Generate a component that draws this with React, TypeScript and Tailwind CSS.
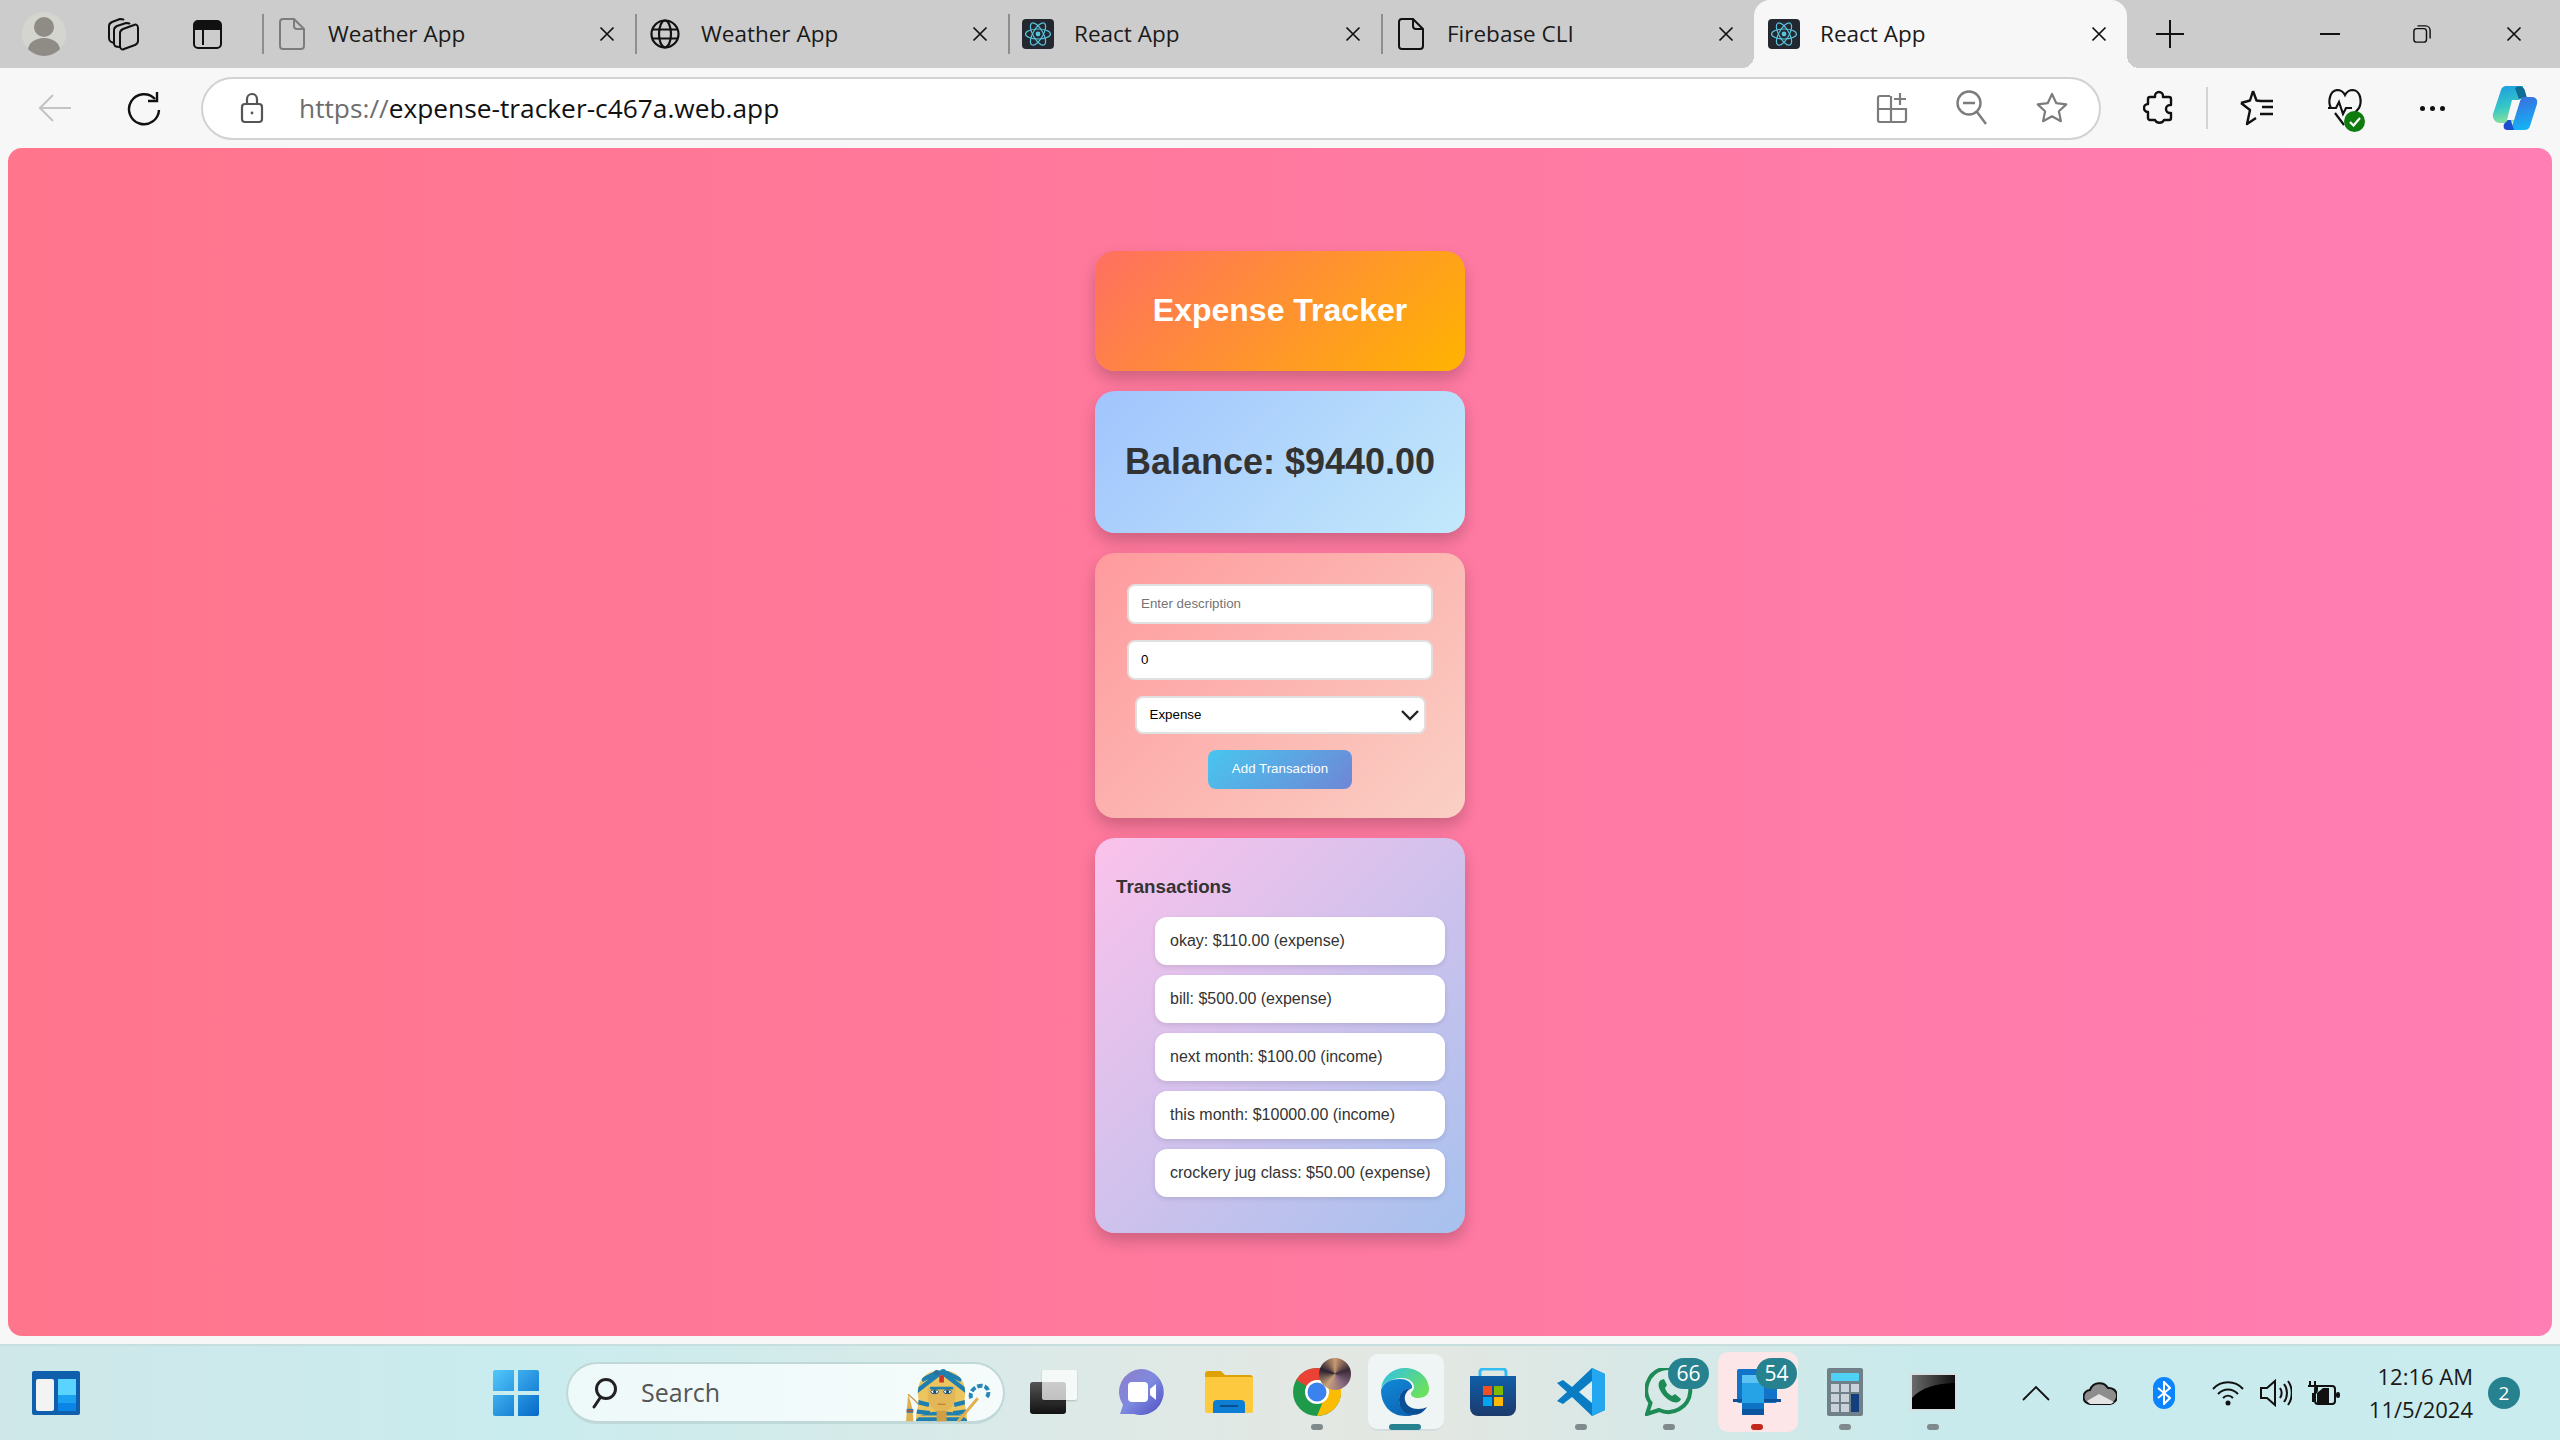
import type { ReactNode } from 'react'

const uiFont = "font-['Open_Sans','Noto_Sans',sans-serif]"

const transactions = [
  'okay: $110.00 (expense)',
  'bill: $500.00 (expense)',
  'next month: $100.00 (income)',
  'this month: $10000.00 (income)',
  'crockery jug class: $50.00 (expense)',
]

function CloseX() {
  return (
    <svg width="16" height="16" viewBox="0 0 16 16" fill="none" stroke="#111" strokeWidth="1.7">
      <path d="M1.5 1.5l13 13M14.5 1.5l-13 13" />
    </svg>
  )
}

function FileIcon({ color = '#7d7d7d' }: { color?: string }) {
  return (
    <svg width="26" height="32" viewBox="0 0 26 32" fill="none" stroke={color} strokeWidth="2">
      <path d="M4 1h11l10 10v17a3 3 0 0 1-3 3H4a3 3 0 0 1-3-3V4a3 3 0 0 1 3-3z" />
      <path d="M15 1v7a3 3 0 0 0 3 3h7" />
    </svg>
  )
}

function GlobeIcon() {
  return (
    <svg width="30" height="30" viewBox="0 0 30 30" fill="none" stroke="#111" strokeWidth="2.2">
      <circle cx="15" cy="15" r="13.5" />
      <ellipse cx="15" cy="15" rx="6" ry="13.5" />
      <path d="M2 10.5h26M2 19.5h26" />
    </svg>
  )
}

function ReactIcon() {
  return (
    <div className="flex h-[30px] w-[32px] items-center justify-center rounded-[4px] bg-[#23272f]">
      <svg width="28" height="28" viewBox="-14 -14 28 28" fill="none" stroke="#58c4dc" strokeWidth="1.2">
        <circle r="2.4" fill="#58c4dc" stroke="none" />
        <ellipse rx="12.5" ry="5" />
        <ellipse rx="12.5" ry="5" transform="rotate(60)" />
        <ellipse rx="12.5" ry="5" transform="rotate(120)" />
      </svg>
    </div>
  )
}

function Tab({ icon, title, active }: { icon: ReactNode; title: string; active?: boolean }) {
  return (
    <div
      className={`relative flex h-[68px] w-[373px] shrink-0 items-center ${
        active ? 'rounded-t-[16px] bg-[#f7f7f7]' : ''
      }`}
    >
      {!active && <div className="h-[40px] w-[2px] bg-[#8e8e8e]" />}
      <div className={`flex w-[56px] justify-center ${active ? 'ml-[2px]' : ''}`}>{icon}</div>
      <span className={`${uiFont} ml-[8px] w-[271px] text-[22.5px] leading-none text-[#1a1a1a]`}>{title}</span>
      <CloseX />
      {active && (
        <>
          <div className="absolute bottom-0 left-[-12px] h-[12px] w-[12px] bg-[radial-gradient(circle_at_0_0,transparent_12px,#f7f7f7_12px)]" />
          <div className="absolute bottom-0 right-[-12px] h-[12px] w-[12px] bg-[radial-gradient(circle_at_100%_0,transparent_12px,#f7f7f7_12px)]" />
        </>
      )}
    </div>
  )
}

function ToolbarSlot({ children, className = 'w-[80px]' }: { children: ReactNode; className?: string }) {
  return <div className={`flex h-full shrink-0 items-center justify-center ${className}`}>{children}</div>
}

function TabStrip() {
  return (
    <div className="flex h-[68px] shrink-0 items-center bg-[#cccccc]">
      <div className="flex w-[262px] shrink-0 items-center">
        <div className="ml-[22px] flex h-[44px] w-[44px] items-center justify-center overflow-hidden rounded-full bg-[#d5d5d0]">
          <svg width="44" height="44" viewBox="0 0 44 44" fill="#8f8b85">
            <circle cx="22" cy="15" r="10" />
            <ellipse cx="22" cy="38" rx="16" ry="12" />
          </svg>
        </div>
        <div className="ml-[40px]">
          <svg width="36" height="36" viewBox="0 0 36 36" fill="none" stroke="#111" strokeWidth="2" strokeLinejoin="round">
            <path d="M8 27 C4 26 3 25 3 22V10c0-2 1-3 3-4l8-3c1 0 3 0 4 1" />
            <path d="M14 31c-5 0-6-1-6-4V14c0-2 1-3 3-4l9-3c1 0 3 0 4 1" />
            <path d="M14 17c0-2 1-3 3-4l11-4c2-1 4 0 4 3v13c0 2-1 3-3 4l-11 4c-2 1-4 0-4-3z" />
          </svg>
        </div>
        <div className="ml-[51px] h-[29px] w-[29px] rounded-[5px] border-[2px] border-[#111] bg-[linear-gradient(#111_0_8px,transparent_8px)]">
          <div className="ml-[7px] mt-[7px] h-[16px] w-[2px] bg-[#111]" />
        </div>
      </div>
      <Tab icon={<FileIcon />} title="Weather App" />
      <Tab icon={<GlobeIcon />} title="Weather App" />
      <Tab icon={<ReactIcon />} title="React App" />
      <Tab icon={<FileIcon color="#111" />} title="Firebase CLI" />
      <Tab icon={<ReactIcon />} title="React App" active />
      <div className="ml-[28px] flex w-[30px] justify-center">
        <svg width="30" height="30" viewBox="0 0 30 30" stroke="#111" strokeWidth="2">
          <path d="M15 1v28M1 15h28" />
        </svg>
      </div>
      <div className="ml-[133px] flex w-[24px] justify-center">
        <div className="h-[2px] w-[20px] bg-[#111]" />
      </div>
      <div className="ml-[71px] flex w-[18px] justify-center">
        <svg width="20" height="20" viewBox="0 0 20 20" fill="none" stroke="#111" strokeWidth="1.6">
          <rect x="1" y="4" width="14" height="15" rx="3" />
          <path d="M5 1h9a5 5 0 0 1 5 5v9" />
        </svg>
      </div>
      <div className="ml-[75px]">
        <CloseX />
      </div>
    </div>
  )
}

function AddressBar() {
  return (
    <div className="flex h-[80px] shrink-0 items-center bg-[#f7f7f7]">
      <ToolbarSlot className="ml-[15px] w-[80px]">
        <svg width="36" height="32" viewBox="0 0 36 32" fill="none" stroke="#c4c4c4" strokeWidth="2.2">
          <path d="M34 16H3M16 3L3 16l13 13" />
        </svg>
      </ToolbarSlot>
      <ToolbarSlot className="ml-[9px] w-[80px]">
        <svg width="36" height="36" viewBox="0 0 36 36" fill="none" stroke="#111" strokeWidth="2.4">
          <path d="M29 9a15 15 0 1 0 4 11" />
          <path d="M31 2v9h-9" />
        </svg>
      </ToolbarSlot>
      <div className="ml-[17px] flex h-[63px] w-[1900px] shrink-0 items-center rounded-full border-[2px] border-[#d2d2d2] bg-white">
        <div className="ml-[37px] w-[28px]">
          <svg width="24" height="32" viewBox="0 0 24 32" fill="none" stroke="#555" strokeWidth="2.2">
            <rect x="2" y="12" width="20" height="18" rx="3" />
            <path d="M7 12V7a5 5 0 0 1 10 0v5" />
            <circle cx="12" cy="21" r="1.4" fill="#555" stroke="none" />
          </svg>
        </div>
        <span className={`${uiFont} ml-[31px] text-[26.3px] leading-none text-[#111]`}>
          <span className="text-[#6d6d6d]">https://</span>expense-tracker-c467a.web.app
        </span>
        <div className="ml-auto mr-[31px] flex items-center gap-[48px]">
          <svg width="32" height="32" viewBox="0 0 32 32" fill="none" stroke="#7c7c7c" strokeWidth="2.2">
            <path d="M14 4H4a2 2 0 0 0-2 2v22a2 2 0 0 0 2 2h24a2 2 0 0 0 2-2V17H2M15 4v26" />
            <path d="M24 1v12M18 7h12" />
          </svg>
          <svg width="32" height="36" viewBox="0 0 32 36" fill="none" stroke="#7c7c7c" strokeWidth="2.4">
            <circle cx="13" cy="13" r="11.5" />
            <path d="M7 13h12M21 22l9 12" />
          </svg>
          <svg width="32" height="32" viewBox="0 0 32 32" fill="none" stroke="#7c7c7c" strokeWidth="2.2" strokeLinejoin="round">
            <path d="M16 2l4.300 9.200 10 1.200-7.400 6.800 2 10L16 24.300 7.100 29.200l2-10L1.700 12.400l10-1.200z" />
          </svg>
        </div>
      </div>
      <ToolbarSlot className="ml-[26px] w-[64px]">
        <svg width="32" height="36" viewBox="0 0 32 36" fill="none" stroke="#111" strokeWidth="2.4" strokeLinejoin="round">
          <path d="M12 6a4 4 0 0 1 8 0v1h6a2 2 0 0 1 2 2v6h-1a4 4 0 0 0 0 8h1v5a2 2 0 0 1-2 2h-5a5 5 0 0 1-9 0H7a2 2 0 0 1-2-2v-6a4 4 0 0 1 0-8V9a2 2 0 0 1 2-2h5z" />
        </svg>
      </ToolbarSlot>
      <div className="ml-[15px] h-[42px] w-[2px] bg-[#d4d4d4]" />
      <ToolbarSlot className="ml-[17px] w-[64px]">
        <svg width="34" height="38" viewBox="0 0 34 38" fill="none" stroke="#111" strokeWidth="2.4" strokeLinejoin="round">
          <path d="M13 2l3.500 9.500 4 .5M1 14l9 7-3 14 9-6M22 18h11M20 25h13M19 12h14" />
          <path d="M1 14l9-2.500L13 2" />
        </svg>
      </ToolbarSlot>
      <ToolbarSlot className="ml-[24px] w-[64px]">
        <div className="relative h-[42px] w-[36px]">
          <svg width="36" height="42" viewBox="0 0 36 42" fill="none" stroke="#111" strokeWidth="2.2">
            <path d="M4 21C1 16 2 4 10 3c4 0 7 3 8 5 1-2 4-5 8-5 8 1 9 12 6 18L23 32M1 21h8l3-6 4 12 3-6h6M8 26l9 12" />
          </svg>
          <div className="absolute bottom-[-3px] right-[-2px] flex h-[21px] w-[21px] items-center justify-center rounded-full bg-[#107c10]">
            <svg width="12" height="10" viewBox="0 0 12 10" fill="none" stroke="white" strokeWidth="2.2">
              <path d="M1 5l3.500 3.500L11 1" />
            </svg>
          </div>
        </div>
      </ToolbarSlot>
      <ToolbarSlot className="ml-[23px] w-[64px]">
        <div className="flex gap-[5px]">
          <div className="h-[5px] w-[5px] rounded-full bg-[#111]" />
          <div className="h-[5px] w-[5px] rounded-full bg-[#111]" />
          <div className="h-[5px] w-[5px] rounded-full bg-[#111]" />
        </div>
      </ToolbarSlot>
      <ToolbarSlot className="ml-[18px] w-[64px]">
        <svg width="48" height="48" viewBox="0 0 48 48">
          <defs>
            <linearGradient id="copA" x1="0.2" y1="0" x2="0.4" y2="1">
              <stop offset="0" stopColor="#1b9de2" />
              <stop offset="0.6" stopColor="#38c9c4" />
              <stop offset="1" stopColor="#8be29a" />
            </linearGradient>
            <linearGradient id="copB" x1="0.4" y1="0" x2="0.6" y2="1">
              <stop offset="0" stopColor="#3a6fe0" />
              <stop offset="1" stopColor="#14b4f5" />
            </linearGradient>
          </defs>
          <path d="M16 2h17l-9 34c-1 3-4 3-6 3H10C5 39 2 34 3 30L11 6c1-3 3-4 5-4z" fill="url(#copA)" />
          <path d="M25 4c4-3 9-2 10 3l2 7-8 1z" fill="#0f6d93" />
          <path d="M32 13h10c4 0 6 3 5 7l-7 22c-1 3-3 4-6 4H17l5-4 8-25z" fill="url(#copB)" />
          <path d="M20 34l4 12H17c-3 0-4-3-3-6z" fill="#1c4fd0" />
          <path d="M22 16h8l-6 20h-7z" fill="#f7f7f7" />
        </svg>
      </ToolbarSlot>
    </div>
  )
}

function Card({ className, children }: { className: string; children: ReactNode }) {
  return (
    <div className={`w-[370px] shrink-0 rounded-[20px] shadow-[0_8px_16px_rgba(0,0,0,0.2)] ${className}`}>{children}</div>
  )
}

function ExpenseTracker() {
  return (
    <div className="mx-[8px] flex h-[1188px] shrink-0 flex-col items-center gap-[20px] rounded-[14px] bg-[linear-gradient(to_right,#ff758c,#ff7eb3)] pt-[103px] font-['Liberation_Sans',Arial,sans-serif]">
      <Card className="flex h-[120px] items-center justify-center bg-[linear-gradient(135deg,#ff6f61,#ffb400)]">
        <h1 className="mt-[-2px] text-[32px] font-bold leading-none text-white">Expense Tracker</h1>
      </Card>
      <Card className="flex h-[142px] items-center justify-center bg-[linear-gradient(135deg,#a1c4fd,#c2e9fb)]">
        <h2 className="text-[36px] font-bold leading-none text-[#333]">Balance: $9440.00</h2>
      </Card>
      <Card className="flex h-[265px] flex-col items-center bg-[linear-gradient(135deg,#ff9a9e,#fad0c4)] pt-[31px]">
        <input
          readOnly
          placeholder="Enter description"
          className="h-[40px] w-[306px] rounded-[8px] border-[2px] border-[#e0e0e0] bg-white px-[12px] pb-[2px] text-[13.33px] text-black outline-none placeholder:text-[#757575]"
        />
        <input
          readOnly
          value="0"
          className="mt-[16px] h-[40px] w-[306px] rounded-[8px] border-[2px] border-[#e0e0e0] bg-white px-[12px] pb-[2px] text-[13.33px] text-black outline-none"
        />
        <div className="relative mt-[16px] h-[38px] w-[291px]">
          <select className="h-full w-full appearance-none rounded-[8px] border-[2px] border-[#e0e0e0] bg-white pl-[13px] text-[13.33px] text-black outline-none">
            <option>Expense</option>
          </select>
          <svg className="absolute right-[7px] top-[13px]" width="18" height="12" viewBox="0 0 18 12" fill="none" stroke="#222" strokeWidth="2.4">
            <path d="M1 2l8 8 8-8" />
          </svg>
        </div>
        <button className="mt-[16px] h-[39px] w-[144px] rounded-[8px] bg-[linear-gradient(135deg,#48c6ef,#6f86d6)] pb-[2px] text-[13.33px] text-white">
          Add Transaction
        </button>
      </Card>
      <Card className="h-[395px] bg-[linear-gradient(135deg,#fbc2eb,#a6c1ee)] pl-[21px] pr-[20px] pt-[38px]">
        <h3 className="text-[18.72px] font-bold leading-[22px] text-[#333]">Transactions</h3>
        <ul className="ml-[39px] mt-[19px] flex flex-col gap-[10px]">
          {transactions.map((item) => (
            <li
              key={item}
              className="flex h-[48px] items-center rounded-[12px] bg-white pl-[15px] text-[16px] text-[#333] shadow-[0_2px_5px_rgba(0,0,0,0.1)]"
            >
              {item}
            </li>
          ))}
        </ul>
      </Card>
    </div>
  )
}

function TaskSlot({
  children,
  dot,
  highlight,
  badge,
}: {
  children: ReactNode
  dot?: string
  highlight?: string
  badge?: string
}) {
  return (
    <div className="relative flex h-[94px] w-[88px] shrink-0 items-center justify-center">
      {highlight && <div className={`absolute rounded-[10px] ${highlight}`} />}
      <div className="relative mt-[-2px]">{children}</div>
      {badge && (
        <div className="absolute right-[4px] top-[12px] flex h-[31px] w-[41px] items-center justify-center rounded-full bg-[#27828f] font-['Open_Sans',sans-serif] text-[21px] text-white">
          {badge}
        </div>
      )}
      {dot && <div className={`absolute bottom-[10px] left-1/2 h-[6px] -translate-x-1/2 rounded-full ${dot}`} />}
    </div>
  )
}

function Pharaoh() {
  return (
    <svg className="absolute right-[11px] top-[4px]" width="87" height="54" viewBox="80 48 262 164">
      <defs>
        <clipPath id="headdress">
          <path d="M112 210c0-30 8-40 8-70C112 100 130 55 190 55s78 45 70 85c0 30 8 40 8 70z" />
        </clipPath>
      </defs>
      <path d="M82 210l6-80c10 20 16 50 16 80z" fill="#e0b050" />
      <path d="M84 172h20v12H84z" fill="#2b7fb0" />
      <path d="M84 176h20v4H84z" fill="#d0502c" />
      <path d="M88 128c25 20 50 50 66 82" fill="none" stroke="#c8963c" strokeWidth="4" />
      <g clipPath="url(#headdress)">
        <rect x="100" y="50" width="180" height="165" fill="#edc55f" />
        <path d="M190 55l-60 30M190 60l-78 60M190 55l60 30M190 60l78 60" stroke="#1f7fb0" strokeWidth="13" fill="none" />
        <path d="M112 150l40 10M268 150l-40 10M110 180l45 5M270 180l-45 5" stroke="#1f7fb0" strokeWidth="13" fill="none" />
        <path d="M110 210c10-20 40-30 80-30s70 10 80 30z" fill="#1f7fb0" />
        <path d="M118 195h145" stroke="#edc55f" strokeWidth="5" />
      </g>
      <rect x="183" y="70" width="14" height="22" fill="#c9352c" />
      <circle cx="195" cy="60" r="9" fill="#1f7fb0" />
      <circle cx="175" cy="62" r="8" fill="#2b6f9b" />
      <path d="M148 105h84v28c0 28-18 48-42 48s-42-20-42-48z" fill="#e3b658" />
      <path d="M155 105h70v8h-70z" fill="#1f7fb0" />
      <ellipse cx="169" cy="120" rx="12" ry="6" fill="#fff" stroke="#17506f" strokeWidth="3" />
      <ellipse cx="208" cy="120" rx="12" ry="6" fill="#fff" stroke="#17506f" strokeWidth="3" />
      <circle cx="169" cy="120" r="5" fill="#17506f" />
      <circle cx="208" cy="120" r="5" fill="#17506f" />
      <path d="M178 158h24" stroke="#a8742c" strokeWidth="3" />
      <path d="M175 178h30v32h-30z" fill="#d09f45" />
      <path d="M240 210l60-70" stroke="#e0b050" strokeWidth="9" />
      <path d="M280 140c-8-20 12-38 32-38 22 0 26 28 12 36" fill="none" stroke="#2487b8" strokeWidth="12" strokeDasharray="16 6" />
    </svg>
  )
}

function Taskbar() {
  return (
    <div className="flex h-[96px] shrink-0 items-center border-t-[2px] border-[#c6dedd] bg-[linear-gradient(to_right,#cfe7e9,#c9ecee_20%,#dfe9e6_45%,#e4e7e2_55%,#c9eaec_75%,#c9ecee)]">
      <svg className="ml-[32px] shrink-0" width="48" height="44" viewBox="0 0 48 44">
        <rect width="48" height="44" rx="2" fill="#0f5fad" />
        <rect x="4" y="8" width="18" height="32" rx="2" fill="#f3f3f3" />
        <rect x="26" y="8" width="18" height="20" fill="#5bd3ff" />
        <rect x="26" y="24" width="18" height="8" fill="#1ba1f0" />
        <rect x="26" y="32" width="18" height="8" fill="#0a84e6" />
      </svg>
      <svg className="ml-[413px] shrink-0" width="46" height="46" viewBox="0 0 46 46">
        <defs>
          <linearGradient id="winA" x1="0" y1="0" x2="1" y2="1">
            <stop offset="0" stopColor="#52c8fb" />
            <stop offset="1" stopColor="#0568c8" />
          </linearGradient>
        </defs>
        <path d="M2 0h19v21H0V2a2 2 0 0 1 2-2zM25 0h19a2 2 0 0 1 2 2v19H25zM0 25h21v21H2a2 2 0 0 1-2-2zM25 25h21v19a2 2 0 0 1-2 2H25z" fill="url(#winA)" />
      </svg>
      <div className="relative ml-[27px] flex h-[62px] w-[439px] shrink-0 items-center rounded-full border-b-[3px] border-l-[2px] border-r-[2px] border-t-[2px] border-[#c0d8d8] bg-[linear-gradient(to_right,#eef9fa,#f5fbfb)]">
        <svg className="ml-[23px]" width="26" height="32" viewBox="0 0 26 32" fill="none" stroke="#222" strokeWidth="3">
          <circle cx="15" cy="12" r="9.500" />
          <path d="M9 21l-6 9" strokeLinecap="round" />
        </svg>
        <span className={`${uiFont} ml-[24px] text-[25px] leading-none text-[#555]`}>Search</span>
        <Pharaoh />
      </div>
      <div className="ml-[4px] flex">
        <TaskSlot>
          <div className="relative h-[44px] w-[47px]">
            <div className="absolute bottom-0 left-0 h-[32px] w-[36px] rounded-[3px] bg-[linear-gradient(#555,#111)]" />
            <div className="absolute right-0 top-0 h-[30px] w-[35px] rounded-[2px] bg-white/70 shadow-[0_1px_2px_rgba(0,0,0,0.2)]" />
          </div>
        </TaskSlot>
        <TaskSlot>
          <svg width="46" height="46" viewBox="0 0 46 46">
            <defs>
              <linearGradient id="meet" x1="0" y1="0" x2="1" y2="1">
                <stop offset="0" stopColor="#8f7ec9" />
                <stop offset="0.5" stopColor="#7d8ae0" />
                <stop offset="1" stopColor="#4f4dc0" />
              </linearGradient>
            </defs>
            <path d="M23 0a23 23 0 1 1-7 45H2l3-9A23 23 0 0 1 23 0z" fill="url(#meet)" />
            <rect x="10" y="13" width="20" height="20" rx="4" fill="#fff" />
            <path d="M32 20l6-5v16l-6-5z" fill="#fff" />
          </svg>
        </TaskSlot>
        <TaskSlot>
          <svg width="48" height="42" viewBox="0 0 48 42">
            <path d="M0 3a3 3 0 0 1 3-3h13l4 4h25a3 3 0 0 1 3 3v4H0z" fill="#e0a106" />
            <path d="M0 6h48v34a2 2 0 0 1-2 2H2a2 2 0 0 1-2-2z" fill="#fdc93f" />
            <path d="M8 42V33a4 4 0 0 1 4-4h24a4 4 0 0 1 4 4v9z" fill="#0c7fd4" />
            <path d="M15 35h18" stroke="#0a4f8c" strokeWidth="2" />
          </svg>
        </TaskSlot>
        <TaskSlot dot="w-[12px] bg-[#7f8a8c]">
          <div className="relative h-[48px] w-[48px]">
            <svg width="48" height="48" viewBox="0 0 48 48">
              <circle cx="24" cy="24" r="24" fill="#1f9a4a" />
              <path d="M24 24L3.200 12A24 24 0 0 1 44.800 12z" fill="#ea4335" />
              <path d="M24 12h21A24 24 0 0 1 24 48l10-24z" fill="#fbbc05" />
              <circle cx="24" cy="24" r="12" fill="#fff" />
              <circle cx="24" cy="24" r="9.500" fill="#3b82ee" />
            </svg>
            <div className="absolute right-[-10px] top-[-10px] h-[32px] w-[32px] rounded-full bg-[conic-gradient(#c79a72,#3a2a3a,#8a6a80,#c9a27a,#2a2030,#c79a72)]" />
          </div>
        </TaskSlot>
        <TaskSlot dot="w-[32px] bg-[#27828f]" highlight="h-[77px] w-[76px] top-[8px] left-[7px] bg-[#eff5f5] border-b-[2px] border-[#d3dddd]">
          <svg width="48" height="48" viewBox="0 0 48 48">
            <defs>
              <linearGradient id="edgeA" x1="0" y1="0" x2="1" y2="0.6">
                <stop offset="0" stopColor="#2cc0ee" />
                <stop offset="1" stopColor="#6ae05f" />
              </linearGradient>
              <linearGradient id="edgeB" x1="0" y1="0" x2="0.5" y2="1">
                <stop offset="0" stopColor="#0f8ad8" />
                <stop offset="1" stopColor="#0e68b8" />
              </linearGradient>
            </defs>
            <path d="M24 0c14 0 24 10 24 21 0 6-5 9-11 9-4 0-7-2-7-4 0-3 3-3 3-7 0-5-5-9-12-9C10 10 2 16 0 20 2 8 12 0 24 0z" fill="url(#edgeA)" />
            <path d="M0 22C2 14 11 11 19 11c8 0 13 5 12 9-6 0-13 4-13 12 0 7 6 13 14 15-2 1-5 1-8 1C10 48 0 37 0 22z" fill="url(#edgeB)" />
            <path d="M31 20c-8 0-13 5-13 12 0 9 7 15 14 15 6 0 11-3 14-8-2 1-5 2-9 2-6 0-12-3-13-9-1-5 2-10 7-12z" fill="#0a4f94" />
          </svg>
        </TaskSlot>
        <TaskSlot>
          <svg width="46" height="48" viewBox="0 0 46 48">
            <defs>
              <linearGradient id="store" x1="0" y1="0" x2="0" y2="1">
                <stop offset="0" stopColor="#0f5ea8" />
                <stop offset="1" stopColor="#1c3a6c" />
              </linearGradient>
            </defs>
            <path d="M10 10V4a3 3 0 0 1 3-3h20a3 3 0 0 1 3 3v6" fill="none" stroke="#32bdf2" strokeWidth="3" />
            <path d="M0 8h46v32a8 8 0 0 1-8 8H8a8 8 0 0 1-8-8z" fill="url(#store)" />
            <rect x="13" y="18" width="9" height="9" fill="#f25022" />
            <rect x="24" y="18" width="9" height="9" fill="#7fba00" />
            <rect x="13" y="29" width="9" height="9" fill="#00a4ef" />
            <rect x="24" y="29" width="9" height="9" fill="#ffb900" />
          </svg>
        </TaskSlot>
        <TaskSlot dot="w-[12px] bg-[#7f8a8c]">
          <svg width="48" height="48" viewBox="0 0 48 48">
            <path d="M35 0l13 6v36l-13 6-20-19-9 7-6-3 10-9L0 15l6-3 9 7z" fill="#0a7cc4" />
            <path d="M35 0l13 6v36l-13 6z" fill="#22a7f0" />
            <path d="M35 13L22 24l13 11z" fill="#e0ecee" />
          </svg>
        </TaskSlot>
        <TaskSlot dot="w-[12px] bg-[#7f8a8c]" badge="66">
          <svg width="48" height="48" viewBox="0 0 48 48" fill="none">
            <path d="M2 46l3.500-11A22 22 0 1 1 14 42z" stroke="#1e8a55" strokeWidth="4" />
            <path d="M16 12c-3 2-3 6-1 10 3 6 8 10 13 12 4 1 7 0 8-3l-6-5-3 2c-4-2-6-5-7-8l2-3-3-6z" fill="#1e8a55" />
          </svg>
        </TaskSlot>
        <TaskSlot dot="w-[12px] bg-[#c4281c]" highlight="h-[80px] w-[80px] top-[6px] left-[5px] bg-[#fde6e8]" badge="54">
          <svg width="48" height="46" viewBox="0 0 48 46">
            <rect x="4" y="0" width="40" height="34" rx="2" fill="#1174c8" />
            <rect x="0" y="30" width="48" height="3" fill="#0f4f96" />
            <rect x="9" y="6" width="22" height="40" rx="2" fill="#25a3e6" />
            <rect x="9" y="6" width="22" height="8" fill="#5cc4f2" />
            <rect x="9" y="34" width="22" height="6" fill="#0e72c4" />
            <rect x="9" y="40" width="22" height="6" fill="#0b56a0" />
          </svg>
        </TaskSlot>
        <TaskSlot dot="w-[12px] bg-[#7f8a8c]">
          <div className="flex h-[48px] w-[36px] flex-col items-center rounded-[2px] bg-[#6f8089] pt-[5px]">
            <div className="h-[8px] w-[28px] rounded-[1px] bg-[#4fd0f5]" />
            <div className="mt-[3px] grid grid-cols-3 gap-[2px]">
              <div className="h-[8px] w-[8px] bg-[#c9d2d8]" />
              <div className="h-[8px] w-[8px] bg-[#c9d2d8]" />
              <div className="h-[8px] w-[8px] bg-[#c9d2d8]" />
              <div className="h-[8px] w-[8px] bg-[#c9d2d8]" />
              <div className="h-[8px] w-[8px] bg-[#c9d2d8]" />
              <div className="row-span-2 w-[8px] bg-[#143f7e]" />
              <div className="h-[8px] w-[8px] bg-[#c9d2d8]" />
              <div className="h-[8px] w-[8px] bg-[#c9d2d8]" />
            </div>
          </div>
        </TaskSlot>
        <TaskSlot dot="w-[12px] bg-[#7f8a8c]">
          <svg width="47" height="38" viewBox="0 0 47 38">
            <defs>
              <linearGradient id="termSheen" x1="0" y1="0" x2="1" y2="0">
                <stop offset="0" stopColor="#6a6a6a" />
                <stop offset="1" stopColor="#111" />
              </linearGradient>
            </defs>
            <rect width="47" height="38" fill="#d8dfe0" />
            <rect x="2" y="2" width="43" height="34" fill="#000" />
            <path d="M2 2h43v8C28 10 10 15 2 25z" fill="url(#termSheen)" />
          </svg>
        </TaskSlot>
      </div>
      <Tray />
    </div>
  )
}

function Tray() {
  return (
    <div className="ml-[27px] flex items-center">
      <ToolbarSlot className="w-[64px]">
        <svg width="28" height="16" viewBox="0 0 28 16" fill="none" stroke="#111" strokeWidth="1.8">
          <path d="M1 15L14 2l13 13" />
        </svg>
      </ToolbarSlot>
      <ToolbarSlot className="w-[64px]">
        <svg width="34" height="24" viewBox="0 0 34 24">
          <path d="M8 23a7 7 0 0 1-1-14 10 10 0 0 1 18-2 7 7 0 0 1 2 16z" fill="#8d8d8d" stroke="#111" strokeWidth="2" />
          <path d="M4 20l12-7 15 8-3 2H7z" fill="#e3e3e3" />
        </svg>
      </ToolbarSlot>
      <ToolbarSlot className="w-[64px]">
        <div className="flex h-[32px] w-[22px] items-center justify-center rounded-[11px] bg-[#0a84ff]">
          <svg width="14" height="24" viewBox="0 0 14 24" fill="none" stroke="white" strokeWidth="2">
            <path d="M1 7l12 10-6 6V1l6 6L1 17" />
          </svg>
        </div>
      </ToolbarSlot>
      <ToolbarSlot className="w-[64px]">
        <svg width="32" height="26" viewBox="0 0 32 26" fill="none" stroke="#111" strokeWidth="2">
          <path d="M1 9c8-9 22-9 30 0M6 14c6-6 14-6 20 0M11 18c3-3 7-3 10 0" />
          <circle cx="16" cy="23" r="2.500" fill="#111" stroke="none" />
        </svg>
      </ToolbarSlot>
      <ToolbarSlot className="w-[32px]">
        <svg width="32" height="28" viewBox="0 0 32 28" fill="none" stroke="#111" strokeWidth="2">
          <path d="M1 9h6l8-7v24l-8-7H1zM20 9c2 3 2 7 0 10M24 5c4 5 4 13 0 18M28 2c5 7 5 17 0 24" />
        </svg>
      </ToolbarSlot>
      <ToolbarSlot className="w-[64px]">
        <svg width="32" height="26" viewBox="0 0 32 26">
          <path d="M2 1v5M7 1v5M0 6h9v4a4 4 0 0 1-4 4v8" fill="none" stroke="#111" strokeWidth="2" />
          <rect x="7" y="6" width="20" height="18" rx="3" fill="none" stroke="#111" strokeWidth="2" />
          <path d="M9 24V13l6-5h6v16z" fill="#111" />
          <rect x="28" y="12" width="4" height="6" rx="2" fill="#111" />
        </svg>
      </ToolbarSlot>
      <div className={`${uiFont} ml-[5px] w-[112px] text-right text-[22px] leading-[33px] text-[#1a1a1a]`}>
        <div>12:16 AM</div>
        <div>11/5/2024</div>
      </div>
      <div className={`${uiFont} ml-[15px] flex h-[32px] w-[32px] items-center justify-center rounded-full bg-[#27828f] text-[19px] text-white`}>
        2
      </div>
    </div>
  )
}

export default function App() {
  return (
    <div className="flex h-[1440px] w-[2560px] flex-col overflow-hidden bg-[#f7f7f7]">
      <TabStrip />
      <AddressBar />
      <ExpenseTracker />
      <div className="h-[8px] shrink-0 bg-[#f7f7f7]" />
      <Taskbar />
    </div>
  )
}
